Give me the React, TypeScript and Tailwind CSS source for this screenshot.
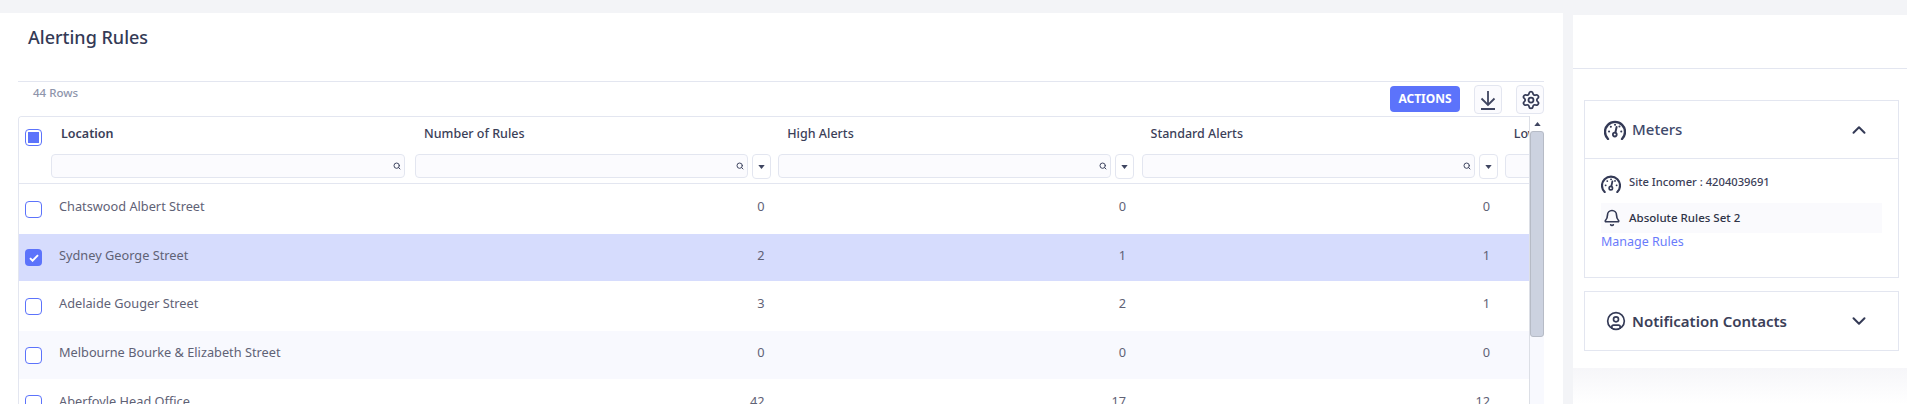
import { Bell, ChevronDown, ChevronUp, CircleUser, Search, Settings } from "lucide-react";

type Row = {
  name: string;
  rules: number;
  high: number;
  standard: number;
  height: string;
  bg: string;
  checked?: boolean;
};

const rows: Row[] = [
  { name: "Chatswood Albert Street", rules: 0, high: 0, standard: 0, height: "h-[50px]", bg: "bg-white" },
  { name: "Sydney George Street", rules: 2, high: 1, standard: 1, height: "h-[47px]", bg: "bg-[#d6dcfd]", checked: true },
  { name: "Adelaide Gouger Street", rules: 3, high: 2, standard: 1, height: "h-[50px]", bg: "bg-white" },
  { name: "Melbourne Bourke & Elizabeth Street", rules: 0, high: 0, standard: 0, height: "h-[48px]", bg: "bg-[#f8f9fe]" },
  { name: "Aberfoyle Head Office", rules: 42, high: 17, standard: 12, height: "h-[49px]", bg: "bg-white" },
];

const columns = ["Number of Rules", "High Alerts", "Standard Alerts"];

function GaugeIcon({ className }: { className: string }) {
  return (
    <svg viewBox="1 1 22 20" fill="none" stroke="currentColor" strokeWidth="2.4" strokeLinecap="round" className={className}>
      <path d="M5 20 A10 10 0 1 1 19 20" />
      <circle cx="11.8" cy="15.6" r="1.9" strokeWidth="1.8" />
      <path d="M12.4 13.4 L13.6 8" strokeWidth="2" />
      <path d="M6 12.5h.1M7.8 7.8h.1M12 5.8h.1M16.4 7.6h.1M18.2 12.5h.1" strokeWidth="2" />
    </svg>
  );
}

function DownloadIcon() {
  return (
    <svg viewBox="0 0 20 22" fill="none" stroke="#3f4560" strokeWidth="1.8" className="h-[22px] w-[20px]">
      <path d="M10 2v14M3.5 9.5 10 16l6.5-6.5M3 20h14" />
    </svg>
  );
}

function Caret({ up }: { up?: boolean }) {
  return (
    <svg viewBox="0 0 8 5" className="h-[4px] w-[7px]" fill="#3f4560">
      <path d={up ? "M0 5 4 0l4 5z" : "M0 0h8L4 5z"} />
    </svg>
  );
}

function Checkbox({ state }: { state: "empty" | "checked" | "partial" }) {
  if (state === "checked") {
    return (
      <span className="flex h-[17px] w-[17px] items-center justify-center rounded-[4px] bg-[#5c73fb]">
        <svg viewBox="0 0 12 10" className="h-[8px] w-[10px]" fill="none" stroke="white" strokeWidth="2.4">
          <path d="M1 5.2 4.2 8.4 11 1.4" />
        </svg>
      </span>
    );
  }
  return (
    <span className="flex h-[17px] w-[17px] items-center justify-center rounded-[4px] border-[1.5px] border-[#5c73fb] bg-white">
      {state === "partial" && <span className="h-[11px] w-[11px] bg-[#5c73fb]" />}
    </span>
  );
}

function Filter({ width, dropdown }: { width: string; dropdown?: boolean }) {
  return (
    <div className="ml-[4px] flex shrink-0 gap-[4px]">
      <div className={`${width} flex h-[24px] items-center justify-end rounded-[4px] border border-[#e3e6f0] bg-[#fbfbfe] pr-[3px]`}>
        <Search size={8} strokeWidth={3} className="text-[#3f4560]" />
      </div>
      {dropdown && (
        <div className="flex h-[25px] w-[19px] items-center justify-center rounded-[4px] border border-[#e3e6f0] bg-white">
          <Caret />
        </div>
      )}
    </div>
  );
}

function Grid() {
  return (
    <div className="w-[1511px] overflow-hidden rounded-tl-[4px] border-l border-t border-[#e3e6f0]">
      <div className="flex h-[67px] w-[1900px] border-b border-[#e3e6f0] bg-white">
        <div className="w-[28px] shrink-0 pl-[6px] pt-[12px]">
          <Checkbox state="partial" />
        </div>
        <div className="w-[364px] shrink-0">
          <div className="h-[37px] pl-[14px] pt-[8px] text-[12.5px] leading-[18px] font-semibold text-[#3b4058]">Location</div>
          <Filter width="w-[354px]" />
        </div>
        {columns.map((col) => (
          <div key={col} className="w-[363.25px] shrink-0">
            <div className="h-[37px] pl-[13px] pt-[8px] text-[12.5px] leading-[18px] font-medium text-[#3b4058]">{col}</div>
            <Filter width="w-[333px]" dropdown />
          </div>
        ))}
        <div className="w-[360px] shrink-0">
          <div className="h-[37px] pl-[13px] pt-[8px] text-[12.5px] leading-[18px] font-medium text-[#3b4058]">Low Alerts</div>
          <Filter width="w-[333px]" dropdown />
        </div>
      </div>
      {rows.map((row) => (
        <div key={row.name} className={`${row.height} ${row.bg} flex w-[1900px] items-center text-[12.75px] text-[#5f6276]`}>
          <div className="w-[28px] shrink-0 pl-[6px]">
            <Checkbox state={row.checked ? "checked" : "empty"} />
          </div>
          <div className="w-[364px] shrink-0 pb-[4px] pl-[12px]">{row.name}</div>
          <div className="w-[353.5px] shrink-0 pb-[4px] text-right">{row.rules}</div>
          <div className="ml-[10.5px] w-[351px] shrink-0 pb-[4px] text-right">{row.high}</div>
          <div className="ml-[13px] w-[351px] shrink-0 pb-[4px] text-right">{row.standard}</div>
        </div>
      ))}
    </div>
  );
}

function Scrollbar() {
  return (
    <div className="w-[15px] border-l border-[#dcdfe6] bg-[#f8f9fe]">
      <div className="flex h-[15px] items-center justify-center bg-white">
        <Caret up />
      </div>
      <div className="h-[206px] rounded-[3px] border border-[#b6bbc6] bg-[#ccd2e0]" />
    </div>
  );
}

function Alerting() {
  return (
    <main className="w-[1563px] shrink-0 bg-white">
      <div className="h-[68px] pl-[28px] pt-[11px]">
        <h1 className="text-[18px] leading-[26px] font-medium text-[#343a56]">Alerting Rules</h1>
      </div>
      <div className="ml-[18px] flex h-[35px] w-[1526px] items-start justify-between border-t border-[#e3e6f0]">
        <span className="pl-[15px] pt-[3px] text-[11.5px] leading-[16px] font-medium text-[#8e95ab]">44 Rows</span>
        <div className="flex items-start gap-[14px] pt-[3px]">
          <button className="mt-[1px] h-[26px] w-[70px] rounded-[4px] bg-[#5c73fb] text-[12px] font-bold text-white">ACTIONS</button>
          <button className="flex h-[29px] w-[28px] items-center justify-center rounded-[4px] border border-[#e3e6f0] bg-[#fbfbfe]">
            <DownloadIcon />
          </button>
          <button className="flex h-[29px] w-[28px] items-center justify-center rounded-[4px] border border-[#e3e6f0] bg-[#fbfbfe] pl-[2px]">
            <Settings size={20} strokeWidth={2.1} className="text-[#343a56]" />
          </button>
        </div>
      </div>
      <div className="ml-[18px] flex w-[1526px]">
        <Grid />
        <Scrollbar />
      </div>
    </main>
  );
}

function Sidebar() {
  return (
    <aside className="ml-[10px] flex flex-1 flex-col pt-[2px]">
      <div className="h-[353px] bg-white">
        <div className="h-[54px] border-b border-[#e3e6f0]" />
        <section className="ml-[11px] mt-[31px] w-[315px] border border-[#e3e6f0]">
          <div className="flex h-[58px] items-center justify-between border-b border-[#e3e6f0] pl-[19px] pr-[28px]">
            <div className="flex items-center gap-[6px] text-[#3f4a6b]">
              <GaugeIcon className="h-[20px] w-[22px] text-[#343a56]" />
              <span className="text-[15px] font-medium">Meters</span>
            </div>
            <ChevronUp size={22} strokeWidth={2.2} className="text-[#343a56]" />
          </div>
          <div className="h-[118px] px-[16px] pt-[16px]">
            <div className="flex h-[28px] items-start gap-[8px] text-[11.2px] leading-[14px] text-[#3b4058]">
              <GaugeIcon className="h-[18px] w-[20px] text-[#343a56]" />
              <span className="font-medium">Site Incomer : 4204039691</span>
            </div>
            <div className="flex h-[30px] items-center bg-[#fafafd] pl-[2px] text-[11.5px] font-medium text-[#2f3347]">
              <Bell size={18} strokeWidth={2.2} className="text-[#343a56]" />
              <span className="ml-[8px] pb-[1px]">Absolute Rules Set 2</span>
            </div>
            <a className="block text-[12.5px] leading-[18px] text-[#6a7bfb]">Manage Rules</a>
          </div>
        </section>
        <section className="ml-[11px] mt-[13px] flex h-[60px] w-[315px] items-center justify-between border border-[#e3e6f0] pl-[21px] pr-[28px]">
          <div className="flex items-center gap-[6px]">
            <CircleUser size={20} strokeWidth={2} className="text-[#343a56]" />
            <span className="text-[15px] font-semibold text-[#3b4058]">Notification Contacts</span>
          </div>
          <ChevronDown size={22} strokeWidth={2.2} className="text-[#343a56]" />
        </section>
      </div>
      <div className="flex-1 bg-linear-to-b from-[#f6f6f9] to-white" />
    </aside>
  );
}

export default function App() {
  return (
    <div className="flex h-[404px] w-[1907px] overflow-hidden bg-[#f3f4f7] pt-[13px] font-['Noto_Sans',sans-serif]">
      <Alerting />
      <Sidebar />
    </div>
  );
}
